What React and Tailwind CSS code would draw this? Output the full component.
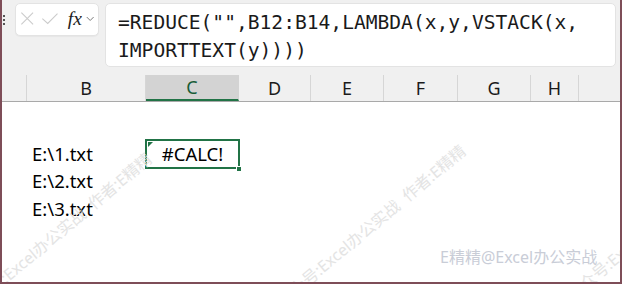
import React from 'react';

const cols = [
  { name: 'B', w: 'w-[119px]' },
  { name: 'C', w: 'w-[93px]', active: true },
  { name: 'D', w: 'w-[72px]' },
  { name: 'E', w: 'w-[73px]' },
  { name: 'F', w: 'w-[74px]' },
  { name: 'G', w: 'w-[73px]' },
  { name: 'H', w: 'w-[48px]' },
];

const files = ['E:\\1.txt', 'E:\\2.txt', 'E:\\3.txt'];

const cellFont = { fontFamily: '"Noto Sans", "Noto Sans CJK SC", sans-serif' };

function Watermark({ className }) {
  return (
    <span
      className={`absolute whitespace-nowrap text-[16px] leading-[20px] text-[#e4e4e4] origin-bottom-left -rotate-[40deg] pointer-events-none ${className}`}
      style={cellFont}
    >
      公众号:Excel办公实战&nbsp;&nbsp;作者:E精精
    </span>
  );
}

export default function App() {
  return (
    <div className="w-[622px] h-[284px] relative overflow-hidden bg-white border-l-2 border-r-2 border-b-2 border-[#7e4d58]">
      {/* top strip: name box + formula bar + column headers */}
      <div className="bg-[#f0f0f0] flex flex-col">
        <div className="flex items-start pt-[3px] pl-[1px]">
          <div className="flex flex-col gap-[2px] pt-[12px] w-[2px]">
            <span className="w-[2px] h-[2px] bg-[#555]" />
            <span className="w-[2px] h-[2px] bg-[#555]" />
            <span className="w-[2px] h-[2px] bg-[#555]" />
          </div>
          <div className="ml-[10px] w-[84px] h-[33px] bg-white rounded-[5px] border border-[#e3e3e3] shadow-[0_1px_1px_rgba(0,0,0,0.04)] flex items-center">
            <svg width="84" height="33" viewBox="0 0 84 33">
              <path d="M5.5 9.5 L17.5 21.5 M17.5 9.5 L5.5 21.5" stroke="#cbcbcb" strokeWidth="1.1" fill="none" />
              <path d="M27 15.5 L32.5 20.5 L42.5 10.5" stroke="#cbcbcb" strokeWidth="1.1" fill="none" />
              <text x="53" y="22.5" fontFamily="Liberation Serif, serif" fontStyle="italic" fontSize="20" fill="#222">fx</text>
              <path d="M72.5 14 L76 17.5 L79.5 14" stroke="#777" strokeWidth="1" fill="none" />
            </svg>
          </div>
          <div className="ml-[6px] mr-[4px] flex-1 h-[64px] bg-white rounded-[5px] border border-[#e3e3e3] pl-[12px] pt-[5px]">
            <div
              className="text-[19.6px] leading-[28px] text-[#1a1a1a] whitespace-pre"
              style={{ fontFamily: '"DejaVu Sans Mono", monospace' }}
            >
              {'=REDUCE("",B12:B14,LAMBDA(x,y,VSTACK(x,\nIMPORTTEXT(y))))'}
            </div>
          </div>
        </div>

        <div className="mt-[8px] flex h-[27px] border-b border-[#a9a9a9]" style={cellFont}>
          <div className="w-[25px] border-r border-[#d6d6d6]" />
          {cols.map((c) => (
            <div
              key={c.name}
              className={`${c.w} flex items-center justify-center text-[18px] border-r ${
                c.active
                  ? 'bg-[#d3d3d3] text-[#185c37] border-[#d3d3d3] border-b-2 border-b-[#217346]'
                  : 'text-[#1b1b1b] border-[#d6d6d6]'
              }`}
            >
              {c.name}
            </div>
          ))}
          <div className="flex-1" />
        </div>
      </div>

      {/* sheet body */}
      <div className="flex flex-col text-[18.5px] text-black" style={cellFont}>
        <div className="h-[38px]" />
        {files.map((f, i) => (
          <div key={f} className="flex h-[27.5px]">
            <div className="w-[25px]" />
            <div className="w-[119px] pl-[5px] flex items-center">{f}</div>
            <div className="w-[93px] relative flex items-center justify-center">
              {i === 0 && (
                <>
                  <span className="absolute -left-[1px] -top-[1px] w-[95px] h-[30px] border-2 border-[#217346]" />
                  <span className="absolute left-[2px] top-[2px] w-0 h-0 border-t-[5px] border-r-[5px] border-t-[#217346] border-r-transparent" />
                  <span className="absolute -right-[3px] -bottom-[4px] w-[6px] h-[6px] bg-[#217346] border border-white" />
                  <span className="relative">#CALC!</span>
                </>
              )}
            </div>
          </div>
        ))}
      </div>

      <Watermark className="left-[-30px] top-[298px]" />
      <Watermark className="left-[284px] top-[290px]" />
      <Watermark className="left-[574px] top-[284px]" />

      <span
        className="absolute left-[438px] top-[246px] text-[16px] leading-[22px] text-[#c9cdd7] whitespace-nowrap"
        style={cellFont}
      >
        E精精@Excel办公实战
      </span>
    </div>
  );
}
